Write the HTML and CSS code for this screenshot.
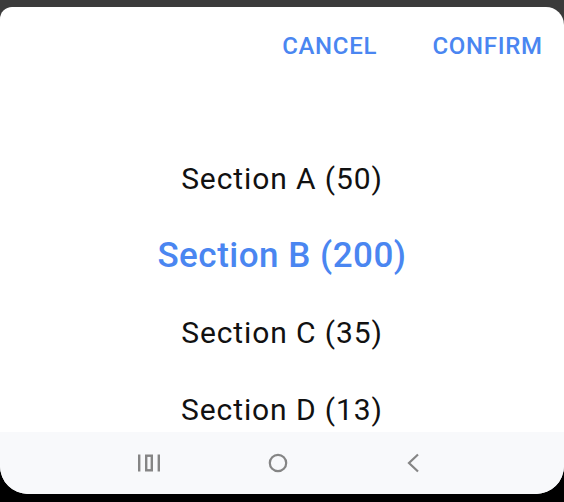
FILE: index.html
```html
<!DOCTYPE html>
<html>
<head>
<meta charset="utf-8">
<link rel="stylesheet" href="styles.css">
</head>
<body>
<div class="screen">
  <div class="sheet">
    <div class="header">
      <span class="btn">CANCEL</span>
      <span class="btn">CONFIRM</span>
    </div>
    <div class="list">
      <div class="item">Section A (50)</div>
      <div class="item selected">Section B (200)</div>
      <div class="item">Section C (35)</div>
      <div class="item">Section D (13)</div>
    </div>
    <div class="nav">
      <svg class="ico ico-recent" width="24" height="20" viewBox="0 0 24 20"><g fill="none" stroke="#858585" stroke-width="2.4"><line x1="2.2" y1="1.5" x2="2.2" y2="18.5"/><rect x="9.2" y="2.7" width="5.6" height="14.6"/><line x1="21.8" y1="1.5" x2="21.8" y2="18.5"/></g></svg>
      <svg class="ico ico-home" width="22" height="22" viewBox="0 0 22 22"><circle cx="11" cy="11" r="8.2" fill="none" stroke="#858585" stroke-width="2.2"/></svg>
      <svg class="ico ico-back" width="16" height="22" viewBox="0 0 16 22"><polyline points="13,2.5 4,11 13,19.5" fill="none" stroke="#858585" stroke-width="2.2"/></svg>
    </div>
  </div>
</div>
</body>
</html>
```
FILE: styles.css
```css
html, body {
  margin: 0;
  padding: 0;
}
body {
  width: 564px;
  height: 502px;
  background: linear-gradient(#3b3b3b 0, #3b3b3b 50%, #000 50%, #000 100%);
  font-family: Roboto, "Liberation Sans", sans-serif;
  overflow: hidden;
}
.screen {
  padding-top: 7px;
  height: 502px;
  box-sizing: border-box;
}
.sheet {
  height: 487px;
  background: #fff;
  border-radius: 12px 18px 28px 28px;
  display: flex;
  flex-direction: column;
  overflow: hidden;
}
.header {
  height: 133px;
  display: flex;
  justify-content: flex-end;
  align-items: flex-start;
  gap: 56px;
  padding: 25px 22px 0 0;
  box-sizing: border-box;
}
.btn {
  color: #4a86f1;
  font-size: 24px;
  font-weight: 500;
  line-height: 28px;
  letter-spacing: 0.7px;
  margin-right: -0.7px;
}
.list {
  flex: 1;
  overflow: hidden;
  display: flex;
  flex-direction: column;
}
.item {
  flex: 0 0 77px;
  display: flex;
  align-items: center;
  justify-content: center;
  font-size: 30px;
  letter-spacing: 0.9px;
  color: #111;
}
.item.selected {
  color: #4a86f1;
  font-size: 35px;
  font-weight: 500;
  letter-spacing: 0.5px;
}
.nav {
  height: 62px;
  flex: 0 0 62px;
  background: #f8f9fb;
  display: flex;
  align-items: center;
  justify-content: flex-start;
  padding-left: 137px;
  box-sizing: border-box;
}
.ico-home {
  margin-left: 106px;
}
.ico-back {
  margin-left: 116px;
}
```
